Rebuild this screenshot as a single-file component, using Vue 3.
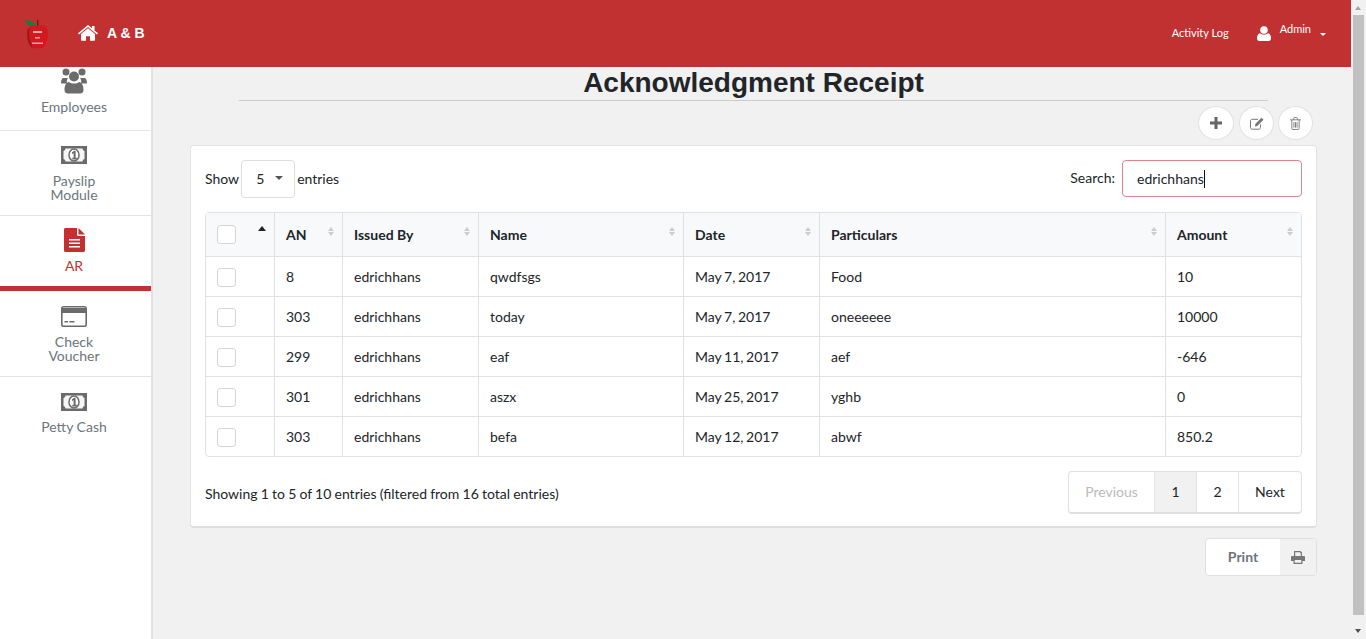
<template>
  <div class="page">
    <div class="main">
      <header class="topbar">
        <svg class="logo" viewBox="0 0 24 30">
          <path d="M0 1c3 0 8 2 11 4.500 0 1.500-2 2-4 2C3 7.500 1 4 0 1z" fill="#1c7a3c" />
          <path d="M12 1h1.500v6H12z" fill="#5b2a1c" />
          <path d="M12 7c5-2 10-.5 11 5 .7 5-1.500 14-5 16.500-2 1.500-4 .5-6 .5s-4 1-6-.5C3 26 1 17 2 12 3 7 8 5 12 7z" fill="#d4181f" />
          <path d="M5 9c-2 4-1 14 3 19-5-1-6-10-5.500-15 .2-2 1-3.500 2.500-4z" fill="#8e1a1c" />
          <path d="M8 12h9v2H8zM10 18h5v1.500h-5zM7 23.500h11V25H7z" fill="#eda5a5" />
        </svg>
        <svg class="home" viewBox="0 0 20 16" fill="#fff">
          <path d="M10 3.200 3 9v6c0 .5.300.8.800.8H8v-4.600h4v4.600h4.200c.5 0 .8-.3.800-.8V9z" />
          <path d="M10 0 0 8.300l1 1.300L10 2.100l9 7.500 1-1.300-3.500-2.900V1h-2.600v2.200z" />
        </svg>
        <span class="brand">A &amp; B</span>
        <nav class="topnav">
          <a class="activity">Activity Log</a>
          <svg class="usericon" viewBox="0 0 14 15" fill="#fff">
            <circle cx="7" cy="4" r="3.800" />
            <path d="M0 12.500C0 9.500 1 7.500 3 7.200c1 .9 2.500 1.300 4 1.300s3-.4 4-1.300c2 .3 3 2.300 3 5.300 0 1.500-1 2.500-2.200 2.500H2.200C1 15 0 14 0 12.500z" />
          </svg>
          <a class="admin">Admin</a>
          <i class="caret-white"></i>
        </nav>
      </header>

      <div class="body">
        <aside class="sidebar">
          <a v-for="item in menu" :key="item.label" class="menu-item" :class="['m-' + item.key, { active: item.active }]">
            <svg v-if="item.icon === 'users'" class="ico ico-users" viewBox="0 0 26 26" fill="#6b6b6b">
              <circle cx="5" cy="4" r="3.500" />
              <circle cx="21" cy="4" r="3.500" />
              <path d="M0 15c0-3 1-5 2.500-5H7c-1 1-1.500 3-1 5.500H1.500C.5 15.500 0 15.500 0 15zM26 15c0-3-1-5-2.500-5H19c1 1 1.500 3 1 5.500h4.500c1 0 1.500 0 1.500-.5z" />
              <circle cx="13" cy="8.500" r="5" />
              <path d="M3.500 22c0-4 1.500-8 4.500-8 1.300 1 3 1.500 5 1.500s3.700-.5 5-1.500c3 0 4.500 4 4.500 8 0 2.500-1.500 3.500-3.500 3.500H7c-2 0-3.500-1-3.500-3.500z" />
            </svg>
            <svg v-else-if="item.icon === 'money'" class="ico ico-money" viewBox="0 0 26 18">
              <rect width="26" height="18" fill="#6b6b6b" />
              <path d="M4.500 2.500h17c.3 1.500 1 2.300 2 2.500v8c-1 .2-1.700 1-2 2.500h-17c-.3-1.500-1-2.300-2-2.500V5c1-.2 1.700-1 2-2.500z" fill="#f6f6f6" />
              <ellipse cx="13" cy="9" rx="5" ry="6" fill="#fff" stroke="#6b6b6b" stroke-width="1.500" />
              <path d="M11 6.200l2.300-1.400h1.300v7h1.200V13.500h-4.500v-1.700h1.300V7.300l-1.600.6z" fill="#6b6b6b" />
            </svg>
            <svg v-else-if="item.icon === 'file'" class="ico ico-file" viewBox="0 0 21 24">
              <path d="M1.500 0H13v6.500c0 .8.700 1.500 1.500 1.500H21v14.500c0 .8-.7 1.500-1.500 1.500h-18C.7 24 0 23.300 0 22.500v-21C0 .7.700 0 1.500 0z" fill="#c23030" />
              <path d="M14.500 0 21 6.500h-6.500z" fill="#c23030" />
              <path d="M5 11h11v1.500H5zM5 14.500h11V16H5zM5 18h11v1.500H5z" fill="#fff" />
            </svg>
            <svg v-else class="ico ico-card" viewBox="0 0 26 21">
              <rect x=".8" y=".8" width="24.400" height="19.400" rx="2" fill="#fff" stroke="#6b6b6b" stroke-width="1.600" />
              <rect x="1" y="2" width="24" height="5" fill="#6b6b6b" />
              <path d="M3.500 15h3.500v1.600H3.500zM8.500 15h5v1.600h-5z" fill="#6b6b6b" />
            </svg>
            <span class="label">
              <template v-for="line in item.lines" :key="line">{{ line }}<br /></template>
            </span>
          </a>
        </aside>

        <main class="content">
          <h1 class="title">Acknowledgment Receipt</h1>
          <div class="actions">
            <button class="round">
              <svg viewBox="0 0 12 12" width="12" height="12" fill="#666"><path d="M4.500 0h3v4.500H12v3H7.500V12h-3V7.500H0v-3h4.500z" /></svg>
            </button>
            <button class="round">
              <svg viewBox="0 0 14 13" width="14" height="13" fill="none" stroke="#777" stroke-width="1">
                <path d="M10.500 7.500v3c0 1-.7 1.700-1.700 1.700H2.200c-1 0-1.700-.7-1.700-1.700V4c0-1 .7-1.700 1.700-1.700H8" />
                <path d="M5 9.500 5.300 7l6.200-6.200 2 2L7.300 9z" fill="#777" stroke="none" />
              </svg>
            </button>
            <button class="round">
              <svg viewBox="0 0 12 14" width="11" height="13" fill="none" stroke="#777" stroke-width="1">
                <path d="M0 3h12M2 3v9.500c0 .6.400 1 1 1h6c.6 0 1-.4 1-1V3M4 3V1.500c0-.6.400-1 1-1h2c.6 0 1 .4 1 1V3M4.300 5.500v6M6 5.500v6M7.700 5.500v6" />
              </svg>
            </button>
          </div>

          <section class="panel">
            <div class="toolbar">
              <div class="length">
                <span class="lift">Show</span>
                <div class="select"><span class="lift">5</span><i class="caret-dark"></i></div>
                <span class="lift">entries</span>
              </div>
              <div class="search">
                <span class="lift">Search:</span>
                <div class="input"><span class="typed">edrichhans</span></div>
              </div>
            </div>

            <table class="grid">
              <colgroup>
                <col v-for="w in widths" :key="w.key" :style="{ width: w.px + 'px' }" />
              </colgroup>
              <thead>
                <tr>
                  <th class="check-cell first">
                    <span class="box"></span>
                    <i class="sort-up"></i>
                  </th>
                  <th v-for="h in headers" :key="h">
                    {{ h }}
                    <span class="sort"><i></i><i></i></span>
                  </th>
                </tr>
              </thead>
              <tbody>
                <tr v-for="row in rows" :key="row.name">
                  <td class="check-cell"><span class="box"></span></td>
                  <td>{{ row.an }}</td>
                  <td>edrichhans</td>
                  <td>{{ row.name }}</td>
                  <td class="date">{{ row.date }}</td>
                  <td>{{ row.particulars }}</td>
                  <td>{{ row.amount }}</td>
                </tr>
              </tbody>
            </table>

            <div class="foot">
              <span class="info">Showing 1 to 5 of 10 entries (filtered from 16 total entries)</span>
              <div class="pager">
                <a class="prev">Previous</a>
                <a class="num current">1</a>
                <a class="num">2</a>
                <a class="next">Next</a>
              </div>
            </div>
          </section>

          <div class="print-row">
            <div class="print">
              <span class="print-text">Print</span>
              <span class="print-icon">
                <svg viewBox="0 0 14 13" width="14" height="13" fill="#777">
                  <path d="M3 0h6.500L11 1.500V5H9.800V2.500L8.800 1.200H4.200V5H3z" />
                  <path d="M1.200 5h11.600c.7 0 1.200.5 1.200 1.200V10h-2.500v3h-9v-3H0V6.200C0 5.500.5 5 1.200 5zm2.500 4v2.800h6.600V9z" fill-rule="evenodd" />
                </svg>
              </span>
            </div>
          </div>
        </main>
      </div>
    </div>

    <div class="scrollbar">
      <i class="arrow-up"></i>
      <div class="thumb"></div>
      <i class="arrow-down"></i>
    </div>
  </div>
</template>

<script setup>
const menu = [
  { key: 'emp', label: 'Employees', lines: ['Employees'], icon: 'users' },
  { key: 'pay', label: 'Payslip', lines: ['Payslip', 'Module'], icon: 'money' },
  { key: 'ar', label: 'AR', lines: ['AR'], icon: 'file', active: true },
  { key: 'chk', label: 'Check', lines: ['Check', 'Voucher'], icon: 'card' },
  { key: 'petty', label: 'Petty', lines: ['Petty Cash'], icon: 'money' }
]

const widths = [
  { key: 'c', px: 68 },
  { key: 'an', px: 68 },
  { key: 'by', px: 136 },
  { key: 'name', px: 205 },
  { key: 'date', px: 136 },
  { key: 'part', px: 346 },
  { key: 'amt', px: 136 }
]

const headers = ['AN', 'Issued By', 'Name', 'Date', 'Particulars', 'Amount']

const rows = [
  { an: 8, name: 'qwdfsgs', date: 'May 7, 2017', particulars: 'Food', amount: '10' },
  { an: 303, name: 'today', date: 'May 7, 2017', particulars: 'oneeeeee', amount: '10000' },
  { an: 299, name: 'eaf', date: 'May 11, 2017', particulars: 'aef', amount: '-646' },
  { an: 301, name: 'aszx', date: 'May 25, 2017', particulars: 'yghb', amount: '0' },
  { an: 303, name: 'befa', date: 'May 12, 2017', particulars: 'abwf', amount: '850.2' }
]
</script>

<style>
html,
body {
  margin: 0;
  overflow: hidden;
}
</style>

<style scoped>
.page {
  display: flex;
  height: 639px;
  width: 1366px;
  overflow: hidden;
  font-family: Lato, "Open Sans", sans-serif;
  font-size: 14px;
  color: #212529;
  background: #f1f1f1;
}

.main {
  width: 1351px;
  display: flex;
  flex-direction: column;
}

.topbar {
  height: 67px;
  flex: none;
  background: #c13131;
  display: flex;
  align-items: center;
  color: #fff;
}

.logo {
  width: 24px;
  height: 30px;
  margin: 0 0 0 25px;
}

.home {
  width: 20px;
  height: 16px;
  margin: -1px 0 0 29px;
}

.brand {
  margin: 0 0 2px 9px;
  font-family: "Liberation Sans", Arial, sans-serif;
  font-weight: 700;
  font-size: 14px;
}

.topnav {
  margin-left: auto;
  display: flex;
  align-items: center;
  font-size: 11px;
}

.activity {
  margin-bottom: 2px;
}

.usericon {
  width: 14px;
  height: 15px;
  margin-left: 28px;
}

.admin {
  margin-left: 9px;
  position: relative;
  top: -5px;
}

.caret-white {
  width: 0;
  height: 0;
  margin: 2px 25px 0 9px;
  border: 3px solid transparent;
  border-top-color: #fff;
  border-bottom: 0;
}

.body {
  flex: 1;
  display: flex;
  min-height: 0;
}

.sidebar {
  width: 151px;
  flex: none;
  background: #fff;
  border-right: 2px solid #e2e2e2;
}

.menu-item {
  display: flex;
  flex-direction: column;
  align-items: center;
  padding-right: 3px;
  color: #6c757d;
  font-size: 14px;
  line-height: 14px;
  border-bottom: 1px solid #e4e4e4;
  box-sizing: border-box;
}

.m-emp {
  height: 64px;
  padding-top: 1px;
}

.m-pay {
  height: 85px;
  padding-top: 15px;
}

.m-ar {
  height: 75px;
  padding-top: 12px;
  border-bottom: 5px solid #c23030;
  color: #c23030;
}

.m-chk {
  height: 86px;
  padding-top: 15px;
}

.m-petty {
  padding-top: 16px;
  border-bottom: 0;
}

.m-petty .ico-money {
  margin-bottom: 9px;
}

.ico {
  display: block;
}

.ico-users {
  width: 26px;
  height: 26px;
  margin-bottom: 6px;
}

.ico-money {
  width: 26px;
  height: 18px;
  margin-bottom: 10px;
}

.ico-file {
  width: 21px;
  height: 24px;
  margin-bottom: 7px;
}

.ico-card {
  width: 26px;
  height: 21px;
  margin-bottom: 8px;
}

.label {
  text-align: center;
}

.content {
  flex: 1;
  min-width: 0;
  padding: 0 34px 0 37px;
}

.title {
  margin: 0 49px;
  height: 33px;
  line-height: 31px;
  text-align: center;
  font-family: "Liberation Sans", Arial, sans-serif;
  font-size: 28px;
  font-weight: 700;
  color: #212529;
  border-bottom: 1px solid #ccc;
}

.actions {
  display: flex;
  justify-content: flex-end;
  gap: 4px;
  margin-top: 5px;
  padding-right: 4px;
}

.round {
  width: 35px;
  height: 34px;
  padding: 0;
  display: flex;
  align-items: center;
  justify-content: center;
  background: #fff;
  border: 1px solid #e2e2e2;
  border-radius: 50%;
}

.round:first-child {
  width: 36px;
  margin-right: 1px;
}

.panel {
  margin-top: 5px;
  height: 383px;
  box-sizing: border-box;
  padding: 14px 14px 0;
  background: #fff;
  border: 1px solid #e3e3e3;
  border-bottom: 2px solid #ddd;
  border-radius: 4px;
}

.toolbar {
  display: flex;
  justify-content: space-between;
  align-items: flex-start;
  height: 52px;
}

.length,
.search {
  display: flex;
  align-items: center;
}

.lift {
  margin-bottom: 2px;
}

.select {
  height: 36px;
  margin: 0 2px;
  border: 1px solid #ddd;
  border-radius: 4px;
  display: flex;
  align-items: center;
  padding-left: 14px;
  width: 38px;
}

.caret-dark {
  width: 0;
  height: 0;
  margin: -3px 0 0 11px;
  border: 4px solid transparent;
  border-top-color: #555;
  border-bottom: 0;
}

.search {
  gap: 7px;
}

.input {
  width: 164px;
  height: 35px;
  padding-left: 14px;
  display: flex;
  align-items: center;
  border: 1px solid #d9868a;
  border-radius: 4px;
}

.typed {
  border-right: 1px solid #111;
  line-height: 18px;
}

.grid {
  width: 1097px;
  table-layout: fixed;
  border-collapse: separate;
  border-spacing: 0;
  border: 1px solid #dee2e6;
  border-radius: 4px;
}

.grid th,
.grid td {
  padding: 0 0 0 11px;
  text-align: left;
  border-left: 1px solid #dee2e6;
  box-sizing: border-box;
}

.grid th:first-child,
.grid td:first-child {
  border-left: 0;
}

.grid th {
  height: 43px;
  background: #f8f9fa;
  font-weight: 700;
  position: relative;
}

.grid td {
  height: 40px;
  border-top: 1px solid #dee2e6;
}

.grid td.date {
  word-spacing: -1px;
}

.box {
  display: block;
  width: 17px;
  height: 17px;
  border: 1px solid #d5d5d5;
  border-radius: 3px;
  background: #fff;
}

.grid td .box {
  margin-top: 1px;
}

.sort-up {
  position: absolute;
  top: 13px;
  left: 52px;
  width: 0;
  height: 0;
  border: 4.500px solid transparent;
  border-bottom: 5px solid #222;
  border-top: 0;
}

.sort {
  position: absolute;
  top: 14px;
  right: 8px;
  display: flex;
  flex-direction: column;
  gap: 1px;
}

.sort i {
  width: 0;
  height: 0;
  border: 3.500px solid transparent;
  border-bottom: 4px solid #ccc;
  border-top: 0;
}

.sort i + i {
  border-bottom: 0;
  border-top: 4px solid #ccc;
}

.foot {
  display: flex;
  justify-content: space-between;
  align-items: center;
  margin-top: 14px;
}

.info {
  word-spacing: -0.4px;
  margin-top: 1px;
}

.pager {
  display: flex;
  height: 40px;
  border: 1px solid #e0e0e0;
  border-bottom: 2px solid #e0e0e0;
  border-radius: 4px;
}

.pager a {
  display: flex;
  align-items: center;
  justify-content: center;
  box-sizing: border-box;
  border-left: 1px solid #e4e4e4;
  padding-bottom: 2px;
}

.prev {
  width: 85px;
  color: #bbb;
  border-left: 0 !important;
}

.num {
  width: 42px;
}

.current {
  background: #f1f1f1;
}

.next {
  width: 63px;
}

.print-row {
  display: flex;
  justify-content: flex-end;
  margin-top: 10px;
}

.print {
  display: flex;
  height: 38px;
  box-sizing: border-box;
  border: 1px solid #e0e0e0;
  border-radius: 4px;
  background: #fff;
  overflow: hidden;
}

.print-text {
  width: 74px;
  display: flex;
  align-items: center;
  justify-content: center;
  padding-bottom: 2px;
  box-sizing: border-box;
  font-weight: 700;
  color: #6c757d;
}

.print-icon {
  width: 36px;
  background: #f1f1f1;
  display: flex;
  align-items: center;
  justify-content: center;
}

.scrollbar {
  width: 15px;
  flex: none;
  background: #f1f1f1;
  position: relative;
}

.thumb {
  margin: 15px 0 0 2px;
  width: 11px;
  height: 600px;
  background: #c1c1c1;
}

.arrow-up,
.arrow-down {
  position: absolute;
  left: 4px;
  width: 0;
  height: 0;
  border: 3.500px solid transparent;
}

.arrow-up {
  top: 6px;
  border-bottom: 4px solid #a3a3a3;
  border-top: 0;
}

.arrow-down {
  bottom: 6px;
  border-top: 4px solid #505050;
  border-bottom: 0;
}
</style>
